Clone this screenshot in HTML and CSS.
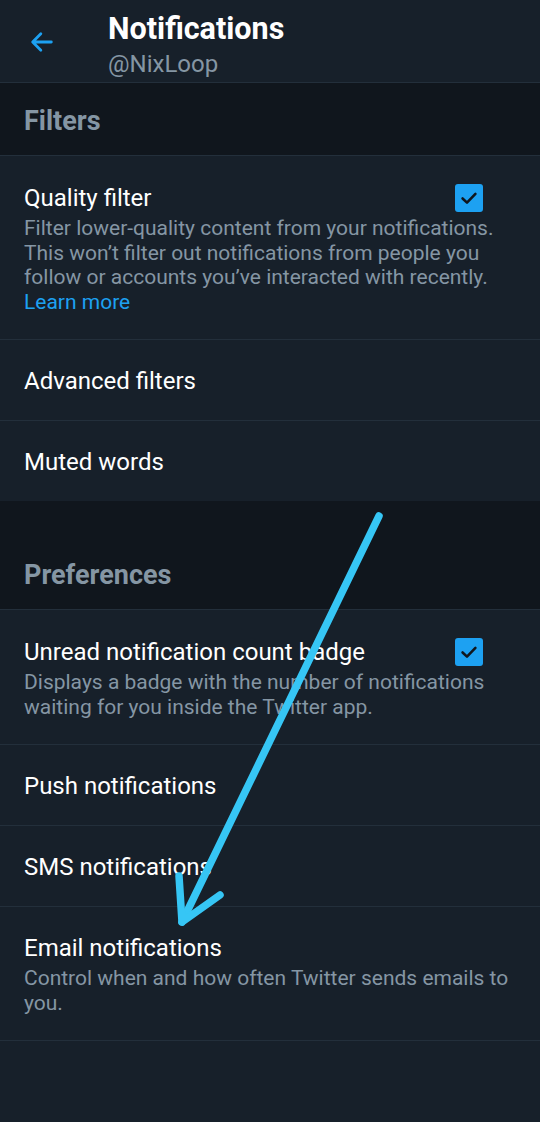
FILE: index.html
```html
<!DOCTYPE html>
<html lang="en">
<head>
    <meta charset="UTF-8">
    <meta name="viewport" content="width=device-width, initial-scale=1.0">
    <title>Notifications</title>
    <link rel="stylesheet" href="styles.css">
</head>
<body>
    <div class="page">
        <div class="header">
            <svg class="back" viewBox="0 0 24 24" width="28" height="28">
                <path d="M20 12H4.5M11 5L4 12L11 19" fill="none" stroke="#1da1f2" stroke-width="2.4" stroke-linecap="round" stroke-linejoin="round"/>
            </svg>
            <div class="titles">
                <div class="title">Notifications</div>
                <div class="handle">@NixLoop</div>
            </div>
        </div>

        <div class="section-title">Filters</div>

        <div class="item tall">
            <div class="item-head">
                <div class="item-name">Quality filter</div>
                <div class="checkbox">
                    <svg viewBox="0 0 24 24" width="22" height="22">
                        <path d="M5 12.5L9.8 17L19 7.5" fill="none" stroke="#10161d" stroke-width="2.8" stroke-linecap="round" stroke-linejoin="round"/>
                    </svg>
                </div>
            </div>
            <div class="item-desc">Filter lower-quality content from your notifications. This won’t filter out notifications from people you follow or accounts you’ve interacted with recently.<br><span class="link">Learn more</span></div>
        </div>
        <div class="item">
            <div class="item-name">Advanced filters</div>
        </div>
        <div class="item last">
            <div class="item-name">Muted words</div>
        </div>

        <div class="spacer"></div>
        <div class="section-title">Preferences</div>

        <div class="item tall">
            <div class="item-head">
                <div class="item-name">Unread notification count badge</div>
                <div class="checkbox">
                    <svg viewBox="0 0 24 24" width="22" height="22">
                        <path d="M5 12.5L9.8 17L19 7.5" fill="none" stroke="#10161d" stroke-width="2.8" stroke-linecap="round" stroke-linejoin="round"/>
                    </svg>
                </div>
            </div>
            <div class="item-desc">Displays a badge with the number of notifications waiting for you inside the Twitter app.</div>
        </div>
        <div class="item">
            <div class="item-name">Push notifications</div>
        </div>
        <div class="item">
            <div class="item-name">SMS notifications</div>
        </div>
        <div class="item tall email">
            <div class="item-head">
                <div class="item-name">Email notifications</div>
            </div>
            <div class="item-desc">Control when and how often Twitter sends emails to you.</div>
        </div>

        <!-- hand drawn annotation arrow over the list -->
        <svg class="annotation" viewBox="0 0 540 1122" width="540" height="1122">
            <g fill="none" stroke="#36c6f5" stroke-width="7.5" stroke-linecap="round" stroke-linejoin="round">
                <path d="M379 516L182 922"/>
                <path d="M179 876L182 922L220 895"/>
            </g>
        </svg>
    </div>
</body>
</html>
```

FILE: styles.css
```css
body {
    margin: 0;
    padding: 0;
    background-color: #17202a;
    font-family: Roboto, "Noto Sans", sans-serif;
    color: #ffffff;
}

.page {
    position: relative;
    width: 540px;
    min-height: 1122px;
}

.header {
    display: flex;
    align-items: flex-start;
    height: 82px;
    border-bottom: 1px solid #232f3b;
}

.back {
    margin: 28px 0 0 28px;
}

.titles {
    margin-left: 52px;
    padding-top: 11px;
}

.title {
    font-size: 30.5px;
    font-weight: 700;
    line-height: 36px;
}

.handle {
    font-size: 24px;
    line-height: 34px;
    color: #8596a4;
}

.section-title {
    height: 69px;
    padding: 3px 24px 0;
    display: flex;
    align-items: center;
    background-color: #10161d;
    font-size: 27px;
    font-weight: 700;
    color: #8596a4;
    border-bottom: 1px solid #232f3b;
}

.spacer {
    height: 36px;
    background-color: #10161d;
}

.item {
    display: flex;
    align-items: center;
    height: 78px;
    padding: 2px 24px 0;
    border-bottom: 1px solid #232f3b;
}

.item.last {
    border-bottom: none;
}

.item.tall {
    height: auto;
    flex-direction: column;
    align-items: stretch;
    padding-top: 27px;
    padding-bottom: 25px;
}

.item.email {
    padding-top: 26px;
}

.item-head {
    display: flex;
    justify-content: space-between;
    align-items: center;
    margin-bottom: 3px;
}

.item-name {
    font-size: 24px;
    line-height: 30px;
}

.item-desc {
    font-size: 21px;
    line-height: 24.5px;
    color: #8596a4;
}

.link {
    color: #1da1f2;
}

.checkbox {
    width: 28px;
    height: 28px;
    margin-right: 33px;
    border-radius: 3px;
    background-color: #1da1f2;
    display: flex;
    justify-content: center;
    align-items: center;
    flex-shrink: 0;
}

.annotation {
    position: absolute;
    top: 0;
    left: 0;
    pointer-events: none;
}
```
